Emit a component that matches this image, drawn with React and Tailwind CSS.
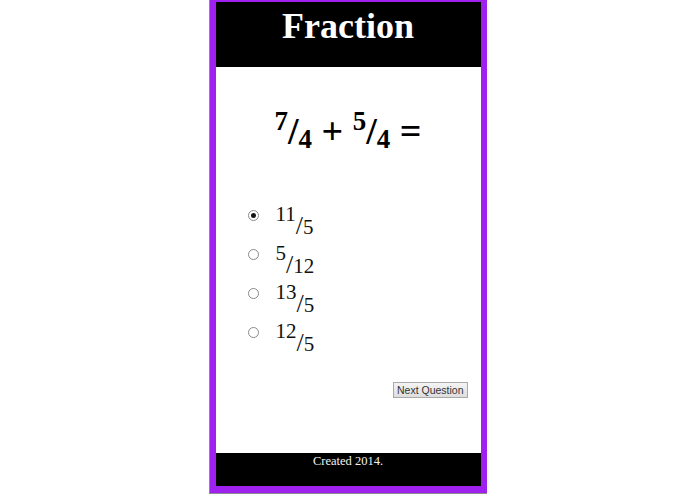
import React, { useState } from 'react';

const options = [
  { id: 'a', num: '11', den: '5' },
  { id: 'b', num: '5', den: '12' },
  { id: 'c', num: '13', den: '5' },
  { id: 'd', num: '12', den: '5' },
];

const Radio = ({ checked }) => (
  <span className="flex h-[11px] w-[11px] items-center justify-center rounded-full border border-[#8a8a8a] bg-white">
    {checked && <span className="h-[5px] w-[5px] rounded-full bg-[#111]" />}
  </span>
);

const App = () => {
  const [selected, setSelected] = useState('a');

  return (
    <div className="flex h-[494px] w-full justify-center bg-white font-['Liberation_Serif',serif]">
      <div className="flex h-[494px] w-[278px] flex-col border-b border-l border-[#8c8c8c]">
        <div className="flex flex-1 flex-col border-x-[6px] border-t-[2px] border-b-[7px] border-[#a020f0] bg-white">
          <header className="h-[65px] bg-black pt-[4px] text-center">
            <h1 className="text-[36px] font-bold leading-[40px] text-white">Fraction</h1>
          </header>

          <main className="flex flex-1 flex-col">
            <div className="pt-[32px] text-center text-[38px] font-bold leading-[44px] text-black">
              <span className="align-[14px] text-[27px]">7</span>
              <span>/</span>
              <span className="align-[-4px] text-[27px]">4</span>
              <span> + </span>
              <span className="align-[14px] text-[27px]">5</span>
              <span>/</span>
              <span className="align-[-4px] text-[27px]">4</span>
              <span> =</span>
            </div>

            <ul className="mt-[35px] flex flex-col pl-[32px]">
              {options.map((opt) => (
                <li
                  key={opt.id}
                  className="flex h-[39px] cursor-pointer items-center gap-[17px]"
                  onClick={() => setSelected(opt.id)}
                >
                  <Radio checked={selected === opt.id} />
                  <span className="text-[26px] leading-none text-[#111]">
                    <span className="relative top-[-3px] text-[21px]">{opt.num}</span>
                    <span className="relative top-[10px]">/</span>
                    <span className="relative top-[10px] text-[21px]">{opt.den}</span>
                  </span>
                </li>
              ))}
            </ul>

            <div className="mt-[30px] flex justify-end pr-[13px]">
              <button className="h-[16px] border border-[#a9a9a9] bg-gradient-to-b from-[#f4f4f4] to-[#dedede] px-[3px] font-['Liberation_Sans',sans-serif] text-[10.5px] leading-[14px] text-[#333]">
                Next Question
              </button>
            </div>
          </main>

          <footer className="h-[33px] bg-black pt-[1px] text-center text-[12.5px] leading-[14px] text-[#f2f2f2]">
            Created 2014.
          </footer>
        </div>
      </div>
    </div>
  );
};

export default App;
